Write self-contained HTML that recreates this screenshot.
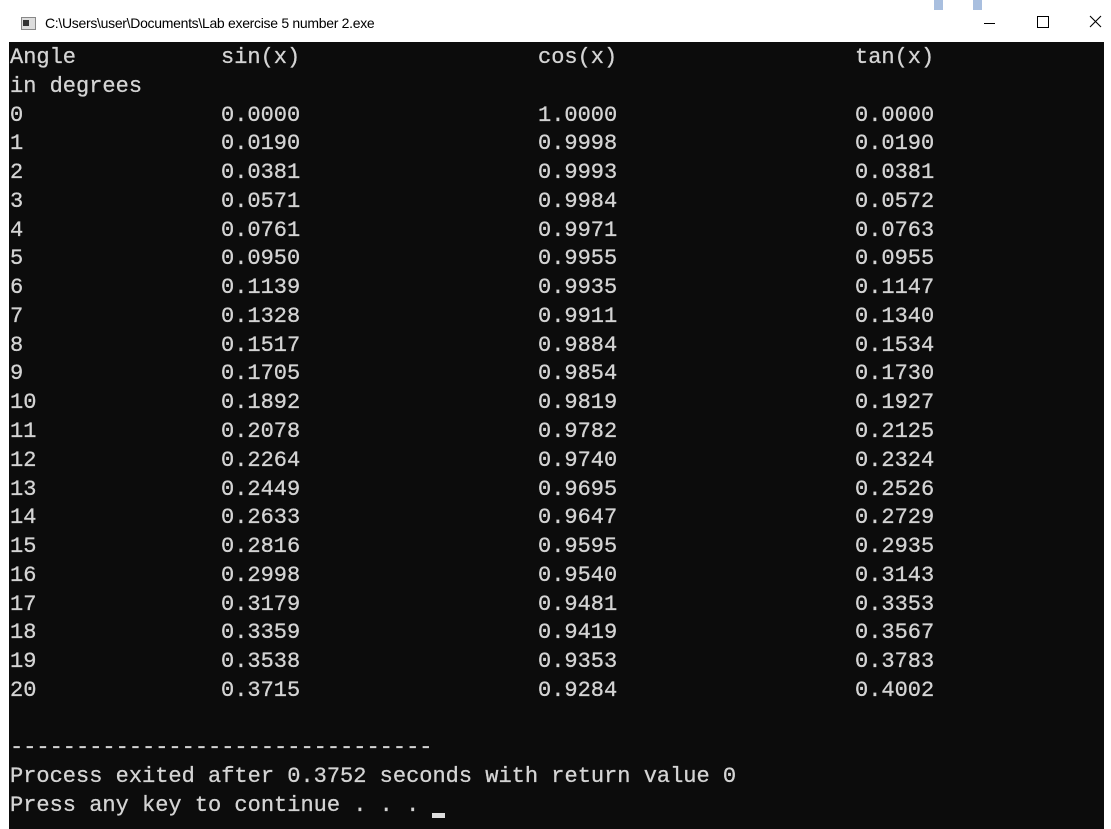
<!DOCTYPE html>
<html><head><style>
html,body{margin:0;padding:0;width:1111px;height:829px;overflow:hidden;background:#fff;position:relative}
.t{position:absolute;left:45px;top:15px;font:14px "Liberation Sans",sans-serif;color:#000;letter-spacing:-0.3px}
.ic{position:absolute;left:21px;top:17px;width:13px;height:11px;border:1px solid #888;background:#ddd}
.ic:before{content:"";position:absolute;left:1px;top:2px;width:6px;height:6px;background:#333}
.con{position:absolute;left:9px;top:42px;width:1095px;height:787px;background:#0c0c0c}
.l{position:absolute;font:22px "Liberation Mono",monospace;color:#d4d4d4;white-space:pre;line-height:28px;-webkit-text-stroke:0.3px #d4d4d4}
.cur{position:absolute;left:432px;top:813px;width:13px;height:5px;background:#ddd}
.b{position:absolute;color:#000;font:18px "DejaVu Sans",sans-serif;font-weight:200}
.deco{position:absolute;top:0;width:9px;height:10px;background:#a9bfdf}
</style></head><body>
<div class="deco" style="left:934px"></div><div class="deco" style="left:973px"></div>
<div class="ic"></div>
<div class="t">C:\Users\user\Documents\Lab exercise 5 number 2.exe</div>
<div style="position:absolute;left:984px;top:23px;width:11px;height:1px;background:#000"></div>
<div style="position:absolute;left:1037px;top:16px;width:10px;height:10px;border:1px solid #000"></div>
<svg style="position:absolute;left:1089px;top:15px" width="13" height="13"><path d="M1 1L12 12M12 1L1 12" stroke="#000" stroke-width="1.1"/></svg>
<div class="con"></div>
<div id="c"></div>
<div class="cur"></div>
<script>
var rows=[["Angle","sin(x)","cos(x)","tan(x)"],["in degrees","","",""],
["0","0.0000","1.0000","0.0000"],["1","0.0190","0.9998","0.0190"],["2","0.0381","0.9993","0.0381"],["3","0.0571","0.9984","0.0572"],["4","0.0761","0.9971","0.0763"],["5","0.0950","0.9955","0.0955"],["6","0.1139","0.9935","0.1147"],["7","0.1328","0.9911","0.1340"],["8","0.1517","0.9884","0.1534"],["9","0.1705","0.9854","0.1730"],["10","0.1892","0.9819","0.1927"],["11","0.2078","0.9782","0.2125"],["12","0.2264","0.9740","0.2324"],["13","0.2449","0.9695","0.2526"],["14","0.2633","0.9647","0.2729"],["15","0.2816","0.9595","0.2935"],["16","0.2998","0.9540","0.3143"],["17","0.3179","0.9481","0.3353"],["18","0.3359","0.9419","0.3567"],["19","0.3538","0.9353","0.3783"],["20","0.3715","0.9284","0.4002"],["","","",""],["--------------------------------","","",""],["Process exited after 0.3752 seconds with return value 0","","",""],["Press any key to continue . . .","","",""]];
var xs=[10,221,538,855],h="";
rows.forEach(function(r,i){var y=44+i*28.77;r.forEach(function(s,j){if(s)h+='<div class="l" style="left:'+xs[j]+'px;top:'+y+'px">'+s+'</div>';});});
document.getElementById("c").innerHTML=h;
</script>
</body></html>
